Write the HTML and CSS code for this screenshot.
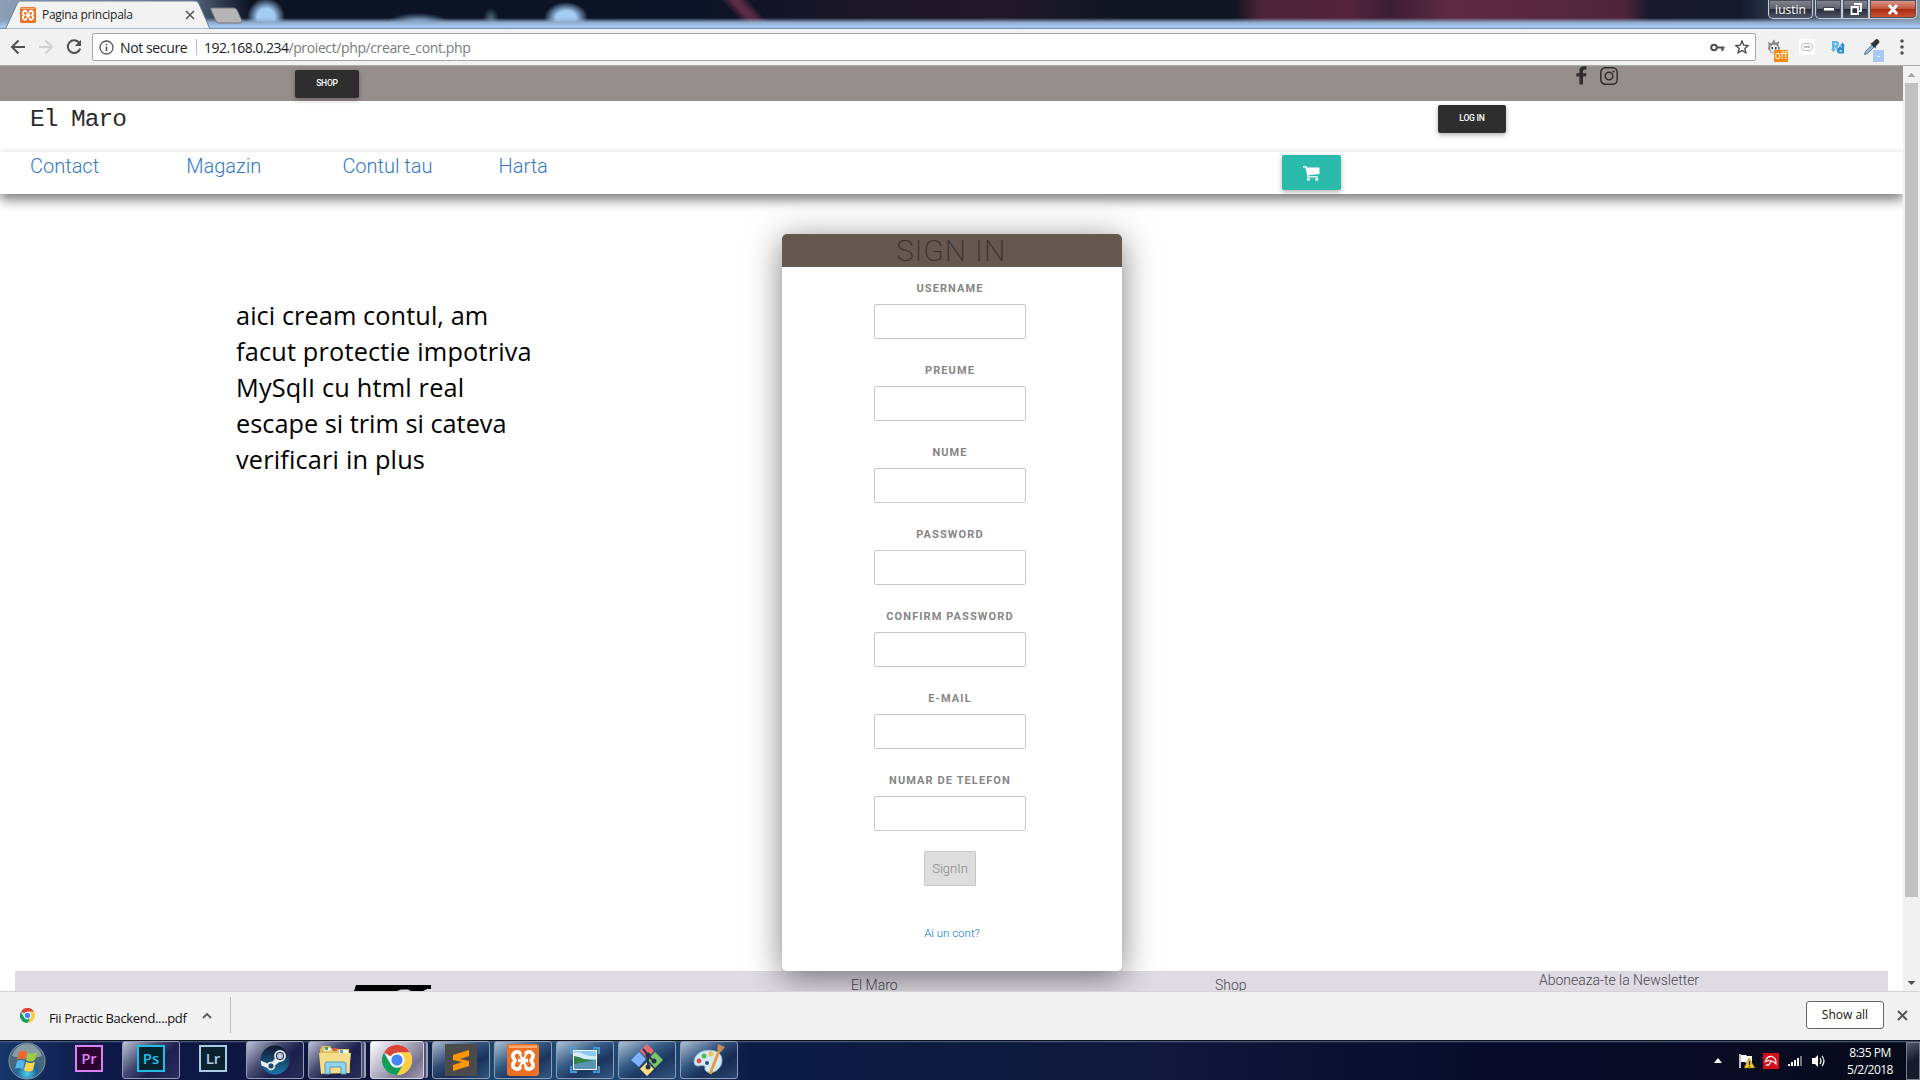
FILE: index.html
```html
<!DOCTYPE html>
<html lang="ro">
<head>
<meta charset="utf-8">
<title>Pagina principala</title>
<link rel="stylesheet" href="styles.css">
</head>
<body>
<div class="screen">
  <header class="titlebar">
    <svg class="tabs" width="250" height="29" viewBox="0 0 250 29"><path d="M5.500 29L17 4Q18 1 20 1H195Q198 1 199 4L210 29z" fill="#f2f2f2" stroke="#6d819b"/><path d="M212 8H234Q236 8 237 10L242 21Q242 23 240 23H219Q217 23 216 21L211 10Q210 8 212 8z" fill="#b5b5b8" stroke="#777"/></svg>
    <div class="tab">
      <svg width="16" height="16" viewBox="0 0 32 32"><use href="#xampp"/></svg>
      <span>Pagina principala</span>
      <svg width="10" height="10" viewBox="0 0 10 10"><path d="M1 1L9 9M9 1L1 9" stroke="#555" stroke-width="1.500"/></svg>
    </div>
    <div class="winbtns"><span class="user">iustin</span><span class="wb"><svg width="12" height="5"><rect x=".5" y=".5" width="11" height="3.500" fill="#fff" stroke="#444"/></svg></span><span class="wb"><svg width="12" height="12"><path d="M4 1H11V8H9M1.500 4H8V11H1.500z" fill="none" stroke="#fff" stroke-width="1.800"/></svg></span><span class="wb close"><svg width="12" height="11"><path d="M2 1L10 10M10 1L2 10" stroke="#fff" stroke-width="2.800"/></svg></span></div>
  </header>
  <div class="toolbar">
    <svg class="back" width="16" height="16" viewBox="0 0 16 16"><path d="M15 8H2M8.500 1.500L2 8L8.500 14.500" fill="none" stroke="#505050" stroke-width="2"/></svg>
    <svg class="fwd" width="16" height="16" viewBox="0 0 16 16"><path d="M1 8H14M7.500 1.500L14 8L7.500 14.500" fill="none" stroke="#d2d2d2" stroke-width="2"/></svg>
    <svg class="reload" width="16" height="16" viewBox="0 0 16 16"><path d="M13.300 4A6.300 6.300 0 1 0 14.200 9.500" fill="none" stroke="#505050" stroke-width="2"/><path d="M15 .8V7H8.800z" fill="#505050"/></svg>
    <div class="omnibox">
      <svg width="15" height="15" viewBox="0 0 15 15"><circle cx="7.500" cy="7.500" r="6.500" fill="none" stroke="#555" stroke-width="1.300"/><path d="M7.500 6.500V11M7.500 3.700V5.200" stroke="#555" stroke-width="1.600"/></svg>
      <span class="secure">Not secure</span><i></i><span class="url"><b>192.168.0.234</b>/proiect/php/creare_cont.php</span>
      <svg class="key" width="15" height="9" viewBox="0 0 15 9"><circle cx="4" cy="4.500" r="2.800" fill="none" stroke="#505050" stroke-width="2"/><path d="M7 4.500H14.500M12.500 4.500V8" stroke="#505050" stroke-width="2.200"/></svg>
      <svg width="14" height="14" viewBox="0 0 14 14"><path d="M7 1L8.700 5.200L13.200 5.500L9.800 8.400L10.900 12.800L7 10.400L3.100 12.800L4.200 8.400L.8 5.500L5.300 5.200z" fill="none" stroke="#444" stroke-width="1.300"/></svg>
    </div>
    <div class="exts">
      <span class="ext"><svg width="14" height="16" viewBox="0 0 16 18"><path d="M2 7L1 3L5 5L8 0L10 4L14 2L13 7L15 10L12 16H5L1 11z" fill="#8a8a8a"/><circle cx="8" cy="11" r="4.500" fill="#e8e8e8"/><path d="M6 9V11.500M10 9V11.500" stroke="#333" stroke-width="1.600"/></svg><em class="off">off</em></span>
      <span class="ext"><svg width="16" height="16" viewBox="0 0 16 16"><rect width="16" height="16" rx="2" fill="#fff"/><rect x="2.500" y="4.500" width="11" height="7" rx="3.500" fill="none" stroke="#bbb"/><path d="M5 8H11" stroke="#aaa" stroke-width="2" stroke-dasharray="1.500 .6"/></svg></span>
      <span class="ext"><svg width="14" height="15" viewBox="0 0 14 15"><path d="M1 1H5.500Q8 1 8 4Q8 6 6.500 6.500L8 9.500H5.500L3.500 6.500V9H5L2.500 12L0 9H1z" fill="#5fb4e8"/><path d="M13 13.500H8.500Q6 13.500 6 10.500Q6 8.500 7.500 8L9 5.500L10.500 8V5.500H9L11.500 2.500L14 5.500H13z" fill="#2a8dd2"/><path d="M3.400 3H5.300V4.700H3.400zM8.600 10H10.500V11.700H8.600z" fill="#e8f4fb"/></svg></span>
      <span class="ext"><svg width="17" height="17" viewBox="0 0 17 17"><path d="M1.500 15.500L2.500 12.500L9 6L11 8L4.500 14.500z" fill="#8fbbe0" stroke="#4f748f"/><path d="M7.500 4.500L9.500 3.500L12.500 .5Q14 -.5 15.500 1Q17 2.500 16 4L13 7L12.500 9.500z" fill="#333"/></svg><em class="drop">-</em></span>
    </div>
    <svg class="dots" width="4" height="16" viewBox="0 0 4 16"><path d="M2 2h.01M2 8h.01M2 14h.01" stroke="#505050" stroke-width="3.500" stroke-linecap="round"/></svg>
  </div>
  <div class="viewport">
    <main class="page">
      <div class="topbar"><a class="btn shop">SHOP</a>
        <svg class="fb" width="11" height="20" viewBox="0 0 11 20"><path d="M10.500 .3V3.500H8.700Q7 3.500 7 5V7.200H10.400L10 10.600H7V18.500H3.400V10.600H.4V7.200H3.400V4.700Q3.400 .2 7.800 .2z" fill="#2e2e2e"/></svg>
        <svg class="ig" width="18" height="18" viewBox="0 0 18 18"><rect x=".8" y=".8" width="16.400" height="16.400" rx="4.500" fill="none" stroke="#2e2e2e" stroke-width="1.500"/><circle cx="9" cy="9" r="3.800" fill="none" stroke="#2e2e2e" stroke-width="1.500"/><circle cx="13.600" cy="4.500" r="1.100" fill="#2e2e2e"/></svg>
      </div>
      <div class="brandbar"><h1>El Maro</h1><a class="btn login">LOG IN</a></div>
      <nav><a>Contact</a><a>Magazin</a><a>Contul tau</a><a>Harta</a><span class="cart"><svg width="17" height="15" viewBox="0 0 17 15"><path d="M0 0H3.300L3.800 1.500H16.500V8L5.500 9.300V10.300H15V11.600H4.200V9L2.500 1.500H0z" fill="#fff"/><circle cx="5.400" cy="13.300" r="1.500" fill="#fff"/><circle cx="13.800" cy="13.300" r="1.500" fill="#fff"/></svg></span></nav>
      <section class="content">
        <p class="note"><span>aici cream contul, am</span><br><span class="l2">facut protectie impotriva</span><br><span class="l3">MySqlI cu html real</span><br><span class="l4">escape si trim si cateva</span><br><span class="l5">verificari in plus</span></p>
        <form class="card">
          <h2>SIGN IN</h2>
          <label>USERNAME<input></label>
          <label>PREUME<input></label>
          <label>NUME<input></label>
          <label>PASSWORD<input></label>
          <label>CONFIRM PASSWORD<input></label>
          <label>E-MAIL<input></label>
          <label>NUMAR DE TELEFON<input></label>
          <button type="button" disabled>SignIn</button>
          <a class="have">Ai un cont?</a>
        </form>
      </section>
      <footer>
        <svg class="logo" width="77" height="6" viewBox="0 0 77 6"><path d="M2 0H77V4H73L69 6H57L54 4.500H47L43 6H0z" fill="#000"/></svg>
        <span class="f1">El Maro</span><span class="f2">Shop</span><span class="f3">Aboneaza-te la Newsletter</span>
      </footer>
    </main>
    <div class="scroll"><svg width="17" height="17"><path d="M4.500 11L8.500 7L12.500 11z" fill="#a3a3a3"/></svg><div class="thumb"></div><svg class="down" width="17" height="17"><path d="M4.500 7L8.500 11L12.500 7z" fill="#505050"/></svg></div>
  </div>
  <div class="downloads">
    <svg width="15" height="15" viewBox="0 0 32 32"><use href="#chrome"/></svg>
    <span class="file">Fii Practic Backend....pdf</span>
    <svg class="chev" width="10" height="7"><path d="M1 6L5 2L9 6" fill="none" stroke="#555" stroke-width="1.800"/></svg><i></i>
    <span class="showall">Show all</span>
    <svg width="11" height="11"><path d="M1 1L10 10M10 1L1 10" stroke="#555" stroke-width="2"/></svg>
  </div>
  <div class="taskbar">
    <span class="start"><svg width="38" height="38" viewBox="0 0 38 38"><defs><radialGradient id="orb" cx=".5" cy=".85"><stop offset="0" stop-color="#4fd0ea"/><stop offset=".55" stop-color="#246494"/><stop offset="1" stop-color="#496778"/></radialGradient></defs><circle cx="19" cy="19" r="18" fill="url(#orb)" stroke="#8497a8"/><path d="M4 14Q8 2 19 2T34 14Q20 19 4 14" fill="#fff" opacity=".35"/><path d="M11 10Q15 7 19 10L17 18Q13 15 9 18z" fill="#f0672e"/><path d="M20 11Q24 13 29 10L27 18Q22 21 18 18z" fill="#9dcb42"/><path d="M9 19Q13 17 17 19L15 27Q11 25 7 27z" fill="#55b5ec"/><path d="M18 20Q22 22 27 20L25 28Q21 31 16 28z" fill="#ffd34b"/></svg></span>
    <span class="task plain"><span class="adobe pr">Pr</span></span>
    <span class="task"><span class="adobe ps">Ps</span></span>
    <span class="task plain"><span class="adobe lr">Lr</span></span>
    <span class="task"><svg width="30" height="30" viewBox="0 0 30 30"><defs><linearGradient id="st" x2="0" y2="1"><stop stop-color="#10162b"/><stop offset="1" stop-color="#1977aa"/></linearGradient></defs><circle cx="15" cy="15" r="14.500" fill="url(#st)"/><path d="M.6 15.500L10 19.500L17 11L22 15L13 22L10 24L1.500 20.500z" fill="#e8eaee"/><circle cx="20" cy="11" r="5" fill="#1b3054" stroke="#e8eaee" stroke-width="1.800"/><circle cx="20" cy="11" r="3" fill="#c6cad4"/><circle cx="11" cy="21" r="3.400" fill="#254871" stroke="#fff" stroke-width="1.500"/></svg></span>
    <span class="task multi"><svg width="34" height="31" viewBox="0 0 34 31"><path d="M2 5L4 1H12L14 4H31L32 28L3 29z" fill="#dfbf5d"/><path d="M6 3H13V6H6z" fill="#fff"/><path d="M7 2h3v3H7z" fill="#35a853"/><path d="M15 3h4v3h-4z" fill="#e65437"/><path d="M21 5h9v4h-9z" fill="#fff"/><path d="M22 5h3v3h-3z" fill="#4aa4dd"/><path d="M1 8H33L31 28H3z" fill="#f4de8a"/><path d="M7 29V19Q7 17 9 17H25Q28 17 28 19V29H23V22H12V29z" fill="#91d4ed" stroke="#4e9dbd"/></svg></span>
    <span class="task active multi"><svg width="30" height="30" viewBox="0 0 32 32"><g id="chrome"><circle cx="16" cy="16" r="16" fill="#fff"/><path d="M16 16L2.100 8A16 16 0 0 1 29.900 8H16z" fill="#db4437"/><path d="M29.900 8A16 16 0 0 1 16 32L23 20A8 8 0 0 0 16 8z" fill="#ffcd40"/><path d="M2.100 8A16 16 0 0 0 16 32L23 20A8 8 0 0 1 9 20z" fill="#0f9d58"/><circle cx="16" cy="16" r="7.800" fill="#fff"/><circle cx="16" cy="16" r="6" fill="#4285f4"/></g></svg></span>
    <span class="task blue"><svg width="32" height="32" viewBox="0 0 32 32"><path d="M0 0H32V32H0z" fill="#4b4b4b"/><path d="M8 11L24 6V12L15 15L24 17V22L8 27V21L17 18L8 16z" fill="#ff9800"/></svg></span>
    <span class="task blue"><svg width="32" height="32" viewBox="0 0 32 32"><g id="xampp"><rect width="32" height="32" rx="3" fill="#ec7125"/><path d="M2 1.500H30V4H2z" fill="#f6ad78"/><path d="M10 12L22 21M22 12L10 21" stroke="#fff" stroke-width="12" stroke-linecap="round"/><path d="M10 12L12.500 16.500L10 21M22 12L19.500 16.500L22 21" fill="none" stroke="#ec7125" stroke-width="4.500" stroke-linecap="round" stroke-linejoin="round"/><path d="M11 16.500H21" stroke="#fff" stroke-width="3.500"/><path d="M16 7V11.500M16 21.500V26" stroke="#ec7125" stroke-width="3" stroke-linecap="round"/></g></svg></span>
    <span class="task blue"><svg width="30" height="26" viewBox="0 0 30 26"><path d="M1 7V1H7M23 1H29V7M29 19V25H23M7 25H1V19" fill="none" stroke="#4998d6" stroke-width="2.500"/><path d="M3 3H27V23H3z" fill="#fff"/><path d="M4 4H26V14H4z" fill="#88c9f2"/><path d="M4 6Q9 4 14 7T26 9V12H4z" fill="#d5ecfa"/><path d="M4 13H26V22H4z" fill="#5b93b4"/><path d="M4 9Q10 10 14 12L24 13.500L4 17z" fill="#347f43"/></svg></span>
    <span class="task blue"><svg width="32" height="32" viewBox="0 0 32 32"><path d="M16 0L23 7L16 14L9 7z" fill="#ef6b73"/><path d="M8 8L15 15L8 23L0 16z" fill="#80b3ff"/><path d="M24 8L32 16L24 24L17 16z" fill="#7cc76b"/><path d="M16 18L23 25L16 32L9 25z" fill="#ffe17d"/><path d="M12 5L17 11V24M17 12L23 17" stroke="#26334d" stroke-width="2" fill="none"/><circle cx="17" cy="11" r="2.500" fill="#26334d"/><circle cx="23" cy="17" r="2.500" fill="#26334d"/><circle cx="17" cy="23" r="2.500" fill="#26334d"/></svg></span>
    <span class="task blue"><svg width="32" height="32" viewBox="0 0 32 32"><path d="M1 18C1 9 12 4 22 7C31 10 31 21 24 26C18 31 11 28 12 24C13 20 7 22 4 22Q1 21 1 18z" fill="#d3eaf6" stroke="#8db8ce"/><circle cx="6" cy="17" r="2.400" fill="#db4950"/><circle cx="11" cy="12" r="2.500" fill="#51b761"/><circle cx="18" cy="10" r="2.500" fill="#f2bf45"/><circle cx="14" cy="19" r="2" fill="#205379"/><path d="M17 30L26 7" stroke="#e99a3f" stroke-width="3"/><path d="M24 6L25 0L32 3L28 8z" fill="#c58a58"/></svg></span>
    <div class="tray">
      <svg width="8" height="5"><path d="M0 5L4 0L8 5z" fill="#fff"/></svg>
      <svg class="flag" width="16" height="16" viewBox="0 0 16 16"><path d="M1 1V15" stroke="#fff" stroke-width="1.500"/><path d="M2 2H7L8 3H13V10H7L6 9H2z" fill="#fff"/><path d="M10 5L16 15H5z" fill="#f4cc27" stroke="#775e00" stroke-width=".5"/><path d="M10.500 8V12M10.500 13V14" stroke="#222" stroke-width="1.300"/></svg>
      <svg class="avira" width="16" height="16" viewBox="0 0 16 16"><path d="M0 0H16V16H0z" fill="#d50f1c"/><path d="M2.500 8.500Q4 3 9 3.500Q13.500 5 13 11Q11 8.500 8.500 8Q5.500 7 2.500 8.500z" fill="none" stroke="#fff" stroke-width="1.200"/><path d="M8.500 8L6 11.500Q4.500 13 3 11.500" fill="none" stroke="#fff" stroke-width="1.200"/></svg>
      <svg class="signal" width="14" height="11" viewBox="0 0 14 11"><path d="M1 11V9M4 11V7M7 11V5M10 11V3" stroke="#fff" stroke-width="2"/><path d="M13 11V1" stroke="#777" stroke-width="2"/></svg>
      <svg class="sound" width="14" height="14" viewBox="0 0 14 14"><path d="M0 4H3L6 1V13L3 10H0z" fill="#fff"/><path d="M8 4Q10 7 8 10M10 2Q14 7 10 12" fill="none" stroke="#fff" stroke-width="1.200"/></svg>
      <div class="clock">8:35 PM<br>5/2/2018</div><span class="peek"></span>
    </div>
  </div>
</div>
</body>
</html>
```
FILE: styles.css
```css
* { box-sizing: border-box; }
body { margin: 0; overflow: hidden; font-family: "Open Sans", sans-serif; }
svg { display: block; flex: none; }
.screen { width: 1920px; height: 1080px; display: flex; flex-direction: column; background: #fff; }

/* window frame */
.titlebar { position: relative; height: 29px; flex: none; display: flex; justify-content: space-between; border-bottom: 1px solid #7590b5;
  background:
    linear-gradient(180deg, transparent 64%, #8fa9c9 80%, #a3c4e8 92%),
    radial-gradient(ellipse 19px 19px at 266px 17px, #a3ccf5 45%, transparent),
    radial-gradient(ellipse 30px 8px at 418px 21px, #6b8db0 20%, transparent),
    radial-gradient(ellipse 8px 10px at 491px 18px, #46606c 10%, transparent),
    radial-gradient(ellipse 22px 16px at 566px 18px, #a3ccf5 45%, transparent),
    linear-gradient(48deg, transparent 555px, #5b2a44 563px, #5b2a44 568px, transparent 576px) 0 0 / 820px 29px no-repeat,
    linear-gradient(90deg, #8c9eb6 0, #62758f 180px, #0c1424 250px, #0b1426 700px, #1a1627 850px, #201828 1000px, #101523 1120px, #101523 1235px, #4c2438 1260px, #54243b 1350px, #3b1e35 1390px, #5e2b41 1450px, #4f2539 1625px, #15182a 1650px, #151a2c 1740px, #55647c 1830px, #8493a8 1920px); }
.tabs { position: absolute; left: 0; top: 0; }
.tab { position: relative; display: flex; align-items: center; width: 195px; height: 29px; padding-left: 20px; font-size: 12px; letter-spacing: -.3px; color: #222; }
.tab span { width: 143px; margin-left: 6px; white-space: nowrap; }
.winbtns { display: flex; height: 19px; margin-right: 3px; color: #fff; font-size: 12px; line-height: 17px; }
.winbtns span { display: flex; align-items: center; justify-content: center; border: 1px solid #c4ccd5; border-top: 0; background: linear-gradient(#84878f, #5e626e 48%, #252937 52%, #50586a); box-shadow: inset 0 0 0 1px #4a4f5b; }
.winbtns .user { width: 45px; margin-right: 2px; border-radius: 0 0 5px 5px; }
.winbtns .wb { width: 27px; }
.winbtns .wb:nth-child(2) { border-radius: 0 0 0 5px; }
.winbtns .close { width: 48px; border-radius: 0 0 5px; background: linear-gradient(#dc9e91, #c4543c 48%, #a82a12 52%, #cf593a); }
.toolbar { height: 37px; flex: none; display: flex; align-items: center; padding-left: 10px; background: #f1f1f2; border-bottom: 1px solid #adabac; }
.fwd { margin-left: 12px; }
.reload { margin-left: 12px; }
.omnibox { width: 1664px; height: 28px; margin-left: 10px; padding: 0 6px; display: flex; align-items: center; border: 1px solid #a6a6a6; border-radius: 2px; background: #fff; font-size: 14px; color: #222; }
.secure { margin-left: 6px; width: 68px; white-space: nowrap; letter-spacing: -.38px; }
.omnibox i { width: 1px; height: 16px; background: #bbb; margin: 0 7px 0 8px; }
.url { color: #7b7b7b; white-space: nowrap; letter-spacing: -.39px; }
.url b { color: #222; font-weight: 400; letter-spacing: -.51px; }
.key { margin-left: auto; margin-right: 10px; }
.exts { display: flex; gap: 16px; margin-left: 11px; }
.ext { position: relative; width: 16px; height: 18px; display: flex; align-items: center; }
.ext em { position: absolute; left: 7px; top: 12px; height: 12px; font: 10px/11px "Open Sans", sans-serif; color: #fff; text-align: center; }
.off { width: 14px; background: #f68a10; }
.ext .drop { left: 10px; width: 11px; background: #a8c8f5; }
.dots { margin-left: 21px; }

/* web page */
.viewport { height: 925px; flex: none; display: flex; }
.page { width: 1903px; height: 925px; display: flex; flex-direction: column; overflow: hidden; font-family: Roboto, sans-serif; font-weight: 300; }
.topbar { height: 35px; flex: none; display: flex; padding-left: 295px; background: #968d8d; }
.btn { position: relative; z-index: 2; height: 28px; margin-top: 4px; border-radius: 2px; background: #2e2e2e; color: #fff; font: 500 8.500px/27px Roboto, sans-serif; letter-spacing: -.2px; text-align: center; box-shadow: 0 2px 5px rgba(0,0,0,.3); }
.shop { width: 64px; }
.fb { margin-left: 1217px; }
.ig { margin: 1px 0 0 13px; }
.brandbar { height: 51px; flex: none; display: flex; padding-left: 30px; }
.brandbar h1 { margin: 0; width: 1408px; font: 400 24.500px/38px "Liberation Mono", monospace; letter-spacing: -1px; color: #2b2b2b; }
.login { width: 68px; }
nav { position: relative; height: 42px; flex: none; display: flex; padding-left: 30px; font-size: 20px; line-height: 29px; color: #3478c9; background: #fff; box-shadow: 0 6px 11px rgba(0,0,0,.5); clip-path: inset(-5px 0 -24px); }
nav a { width: 156.200px; }
.cart { width: 59px; height: 35px; margin: 3px 0 0 627.200px; padding: 2px 0 0 1px; display: flex; align-items: center; justify-content: center; background: #2bbbad; border-radius: 2px; box-shadow: 0 2px 5px rgba(0,0,0,.3); }
.content { flex: 1; display: flex; align-items: flex-start; padding-top: 40px; }
.note { width: 546px; margin: 63px 0 0 236px; font: 400 25.300px/36px "Open Sans", sans-serif; color: #000; white-space: nowrap; letter-spacing: .08px; }
.l2, .l3, .l5 { letter-spacing: .18px; }
.l4 { letter-spacing: 0; }
.card { position: relative; z-index: 2; width: 340px; height: 737px; display: flex; flex-direction: column; align-items: center; padding-right: 4px; border-radius: 5px; background: #fff; box-shadow: 0 6px 34px rgba(0,0,0,.5); }
.card h2 { width: 340px; height: 33px; margin: 0 -4px 0 0; border-radius: 5px 5px 0 0; background: #665750; color: #3a322e; font: 200 30px/33px Roboto, sans-serif; letter-spacing: .900px; text-align: center; padding-right: 2px; }
.card label { height: 82px; flex: none; display: flex; flex-direction: column; align-items: center; padding-top: 15px; color: #868686; font-size: 11px; font-weight: 700; line-height: 14px; letter-spacing: 1.100px; }
.card input { display: block; width: 152px; height: 35px; margin-top: 8px; border: 1px solid #c8c8c8; border-radius: 2px; background: #fff; }
.card button { width: 52px; height: 35px; flex: none; margin-top: 10px; padding: 0; border: 1px solid #c6c6c6; border-radius: 2px; background: #ddd; color: #888; font: 300 13px Roboto, sans-serif; }
.have { margin: 40px 0 0 4px; font-size: 11.500px; line-height: 14px; color: #0275d8; font-weight: 300; }
footer { height: 20px; flex: none; display: flex; margin: 0 15px; background: #dedbe2; color: #4a4853; font-size: 14px; line-height: 12px; white-space: nowrap; }
.logo { margin: 14px 0 0 339px; }
.f1 { width: 364px; margin: 8px 0 0 420px; }
.f2 { width: 324px; margin-top: 8px; }
.f3 { margin-top: 3px; letter-spacing: -.02px; }
.scroll { width: 17px; display: flex; flex-direction: column; background: #f1f1f1; }
.thumb { width: 13px; height: 814px; margin-left: 2px; background: #c1c1c1; }
.down { margin-top: auto; }

/* download shelf */
.downloads { height: 49px; flex: none; display: flex; align-items: center; padding: 0 12px 2px 20px; background: #f1f1f1; border-top: 1px solid #d3d3d6; font-size: 13px; color: #111; }
.file { margin: 6px 15px 0 14px; width: 138px; letter-spacing: -.35px; white-space: nowrap; }
.downloads i { width: 1px; height: 36px; margin-left: 18px; background: #bcbcbc; }
.showall { width: 78px; height: 28px; margin-left: auto; margin-right: 13px; border: 1px solid #666; border-radius: 3px; background: #fff; font-size: 12px; line-height: 25px; text-align: center; }

/* taskbar */
.taskbar { height: 40px; flex: none; display: flex; align-items: flex-start; border-top: 1px solid #10141f; background: linear-gradient(#596985 0, transparent 5%), linear-gradient(90deg, #17366a 0, #0d1848 100px, #0d1539 400px, #1d4a70 500px, #1e4973 670px, #0b1b43 750px, #10183c 1150px, #080b2a 1500px, #090c22 1750px, #050a18 1920px); }
.start { width: 60px; padding-left: 8px; padding-top: 1px; }
.task { width: 58px; height: 38px; margin-right: 4px; flex: none; display: flex; align-items: center; justify-content: center; border: 1px solid #939bb5; border-radius: 3px; background: linear-gradient(135deg, rgba(220,224,239,.85), rgba(112,116,150,.55) 38%, rgba(35,35,83,.7) 62%, rgba(60,62,105,.6)); }
.plain { background: none; border-color: transparent; }
.blue { background: linear-gradient(150deg, rgba(210,222,238,.8), rgba(76,112,154,.5) 40%, rgba(26,42,84,.65) 65%, rgba(67,104,147,.5)); }
.active { padding-right: 5px; background: linear-gradient(135deg, #fff, #b8b5c8 40%, #77718d 75%, #a7a1b6); border-color: #d6d6df; }
.multi { width: 54px; margin-right: 8px; padding-right: 0; box-shadow: 3px 0 0 -1px #4d5278, 5px 0 0 -1px #9ba0b8; }
.adobe { width: 28px; height: 27px; margin-bottom: 4px; border: 2px solid; font: 600 15px/22px "Open Sans", sans-serif; text-align: center; }
.pr { color: #dc83f2; background: #2b0530; }
.ps { color: #22bde7; background: #02222e; }
.lr { color: #adcbe4; background: #0a222f; }
.tray { display: flex; align-items: center; height: 39px; margin-left: auto; color: #fff; font-size: 12px; line-height: 17px; text-align: center; }
.flag { margin-left: 17px; }
.avira { margin-left: 8px; }
.signal { margin-left: 9px; }
.sound { margin-left: 10px; }
.clock { width: 48px; margin-left: 20px; letter-spacing: -.5px; white-space: nowrap; }
.peek { width: 14px; height: 38px; margin-left: 12px; border: 1px solid #777d8e; background: linear-gradient(150deg, #555b6c, #161b2c 50%); }
```
